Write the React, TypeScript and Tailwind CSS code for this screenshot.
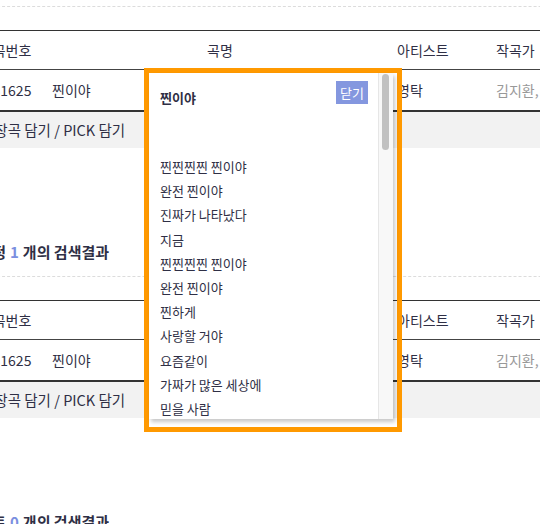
import React from "react";

const lyrics = [
  "찐찐찐찐 찐이야",
  "완전 찐이야",
  "진짜가 나타났다",
  "지금",
  "찐찐찐찐 찐이야",
  "완전 찐이야",
  "찐하게",
  "사랑할 거야",
  "요즘같이",
  "가짜가 많은 세상에",
  "믿을 사람",
  "너 하나야",
  "찐찐찐찐 찐이야",
  "완전 찐이야",
];

function Block({ prefix, count, rows }: { prefix: string; count: number; rows: boolean }) {
  return (
    <div className="h-[270px]">
      <div className="h-[20px] flex items-center text-[15px] font-bold leading-[20px]">
        <div className="w-[34px] flex justify-end">
          <span className="shrink-0 whitespace-nowrap">{prefix}</span>
        </div>
        <span className="ml-[4px] text-[#7b8fe0]">{count}</span>
        <span className="ml-[4px] whitespace-nowrap">개의 검색결과</span>
      </div>
      <div className="mt-[14px] h-[24px] border-t border-dashed border-[#dcdcdc]" />
      {rows && (
        <div className="border-t border-[#333] text-[14px]">
          <div className="grid grid-cols-[80px_336px_99px_200px] h-[38px] items-center">
            <div className="text-center">곡번호</div>
            <div className="text-center">곡명</div>
            <div className="pl-[9px]">아티스트</div>
            <div className="pl-[9px]">작곡가</div>
          </div>
          <div className="grid grid-cols-[80px_336px_99px_200px] h-[41px] items-center border-t border-[#444]">
            <div className="text-center">31625</div>
            <div>찐이야</div>
            <div className="pl-[9px]">영탁</div>
            <div className="pl-[9px] text-[#999] whitespace-nowrap">김지환, 박현우</div>
          </div>
          <div className="h-[38px] border-t-2 border-[#333] bg-[#f2f2f2] flex items-center pl-[9px] text-[14.5px]">
            애창곡 담기 / PICK 담기
          </div>
        </div>
      )}
    </div>
  );
}

export default function App() {
  return (
    <div className="relative w-[540px] h-[524px] overflow-hidden bg-white text-[#2f2f45] font-['Noto_Sans_CJK_KR',sans-serif]">
      <div className="-mt-[28px] -ml-[28px] w-[720px]">
        <Block prefix="곡명" count={1} rows={true} />
        <Block prefix="작곡가 지정" count={1} rows={true} />
        <Block prefix="아티스트" count={0} rows={false} />
      </div>

      <div className="absolute left-[144px] top-[68px] w-[258px] h-[364px] border-[5px] border-[#ff9900] pr-[4px] pb-[8px]">
        <div className="w-[244px] h-[346px] bg-white flex shadow-[2px_3px_4px_rgba(0,0,0,0.22)]">
          <div className="w-[229px] h-full overflow-hidden pl-[11px]">
            <div className="flex justify-between items-start">
              <div className="mt-[13px] leading-[24px] text-[13px] font-bold">찐이야</div>
              <div className="mt-[8px] mr-[10px] w-[32px] h-[23px] bg-[#8497df] text-white text-[13px] flex items-center justify-center">
                닫기
              </div>
            </div>
            <div className="mt-[45px] text-[13px] leading-[24.2px]">
              {lyrics.map((l, i) => (
                <div key={i} className="whitespace-nowrap">{l}</div>
              ))}
            </div>
          </div>
          <div className="w-[15px] h-full bg-[#f8f8f8] border-l border-[#e6e6e6] pt-[1px] pl-[3px]">
            <div className="w-[7px] h-[76px] rounded-full bg-[#c1c1c1]" />
          </div>
        </div>
      </div>
    </div>
  );
}
